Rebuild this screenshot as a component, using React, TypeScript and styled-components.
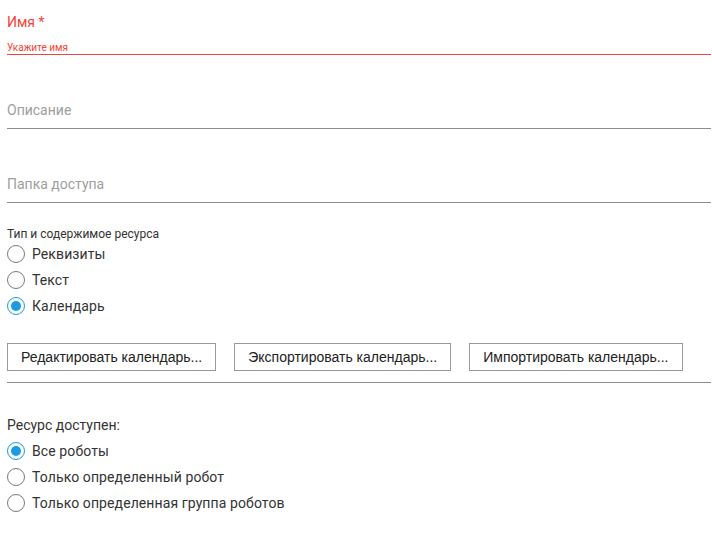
import styled, { createGlobalStyle } from "styled-components";

const GlobalStyle = createGlobalStyle`
    body {
        margin: 0;
        background: #ffffff;
        font-family: Roboto, "Noto Sans", sans-serif;
    }
`;

const typeOptions = ["Реквизиты", "Текст", "Календарь"];
const accessOptions = ["Все роботы", "Только определенный робот", "Только определенная группа роботов"];
const buttons = ["Редактировать календарь...", "Экспортировать календарь...", "Импортировать календарь..."];

const RadioGroup = ({ options, selected }: { options: string[]; selected: number }) => (
    <Group>
        {options.map((o, i) => (
            <RadioRow key={i}>
                <Circle $checked={i === selected} />
                {o}
            </RadioRow>
        ))}
    </Group>
);

const App = () => {
    return (
        <Page>
            <GlobalStyle />
            <ErrorField>
                <Label>Имя *</Label>
                <ErrorText>Укажите имя</ErrorText>
            </ErrorField>
            <Field>
                <Placeholder>Описание</Placeholder>
            </Field>
            <Field>
                <Placeholder>Папка доступа</Placeholder>
            </Field>

            <SmallCaption>Тип и содержимое ресурса</SmallCaption>
            <RadioGroup options={typeOptions} selected={2} />

            <ButtonBar>
                {buttons.map((b) => (
                    <Button key={b}>{b}</Button>
                ))}
            </ButtonBar>

            <Caption>Ресурс доступен:</Caption>
            <RadioGroup options={accessOptions} selected={0} />
        </Page>
    );
};

const Page = styled.div`
    padding: 0 1px 0 7px;
    color: #333333;
`;

const ErrorField = styled.div`
    height: 55px;
    box-sizing: border-box;
    border-bottom: 1px solid #e8453c;
    display: flex;
    flex-direction: column;
`;

const Field = styled.div`
    height: 74px;
    box-sizing: border-box;
    border-bottom: 1px solid #8c8c8c;
    display: flex;
    flex-direction: column;
    justify-content: flex-end;
`;

const Label = styled.div`
    margin-top: 14px;
    font-size: 14px;
    line-height: 16px;
    color: #f44336;
`;

const ErrorText = styled.div`
    margin-top: 12px;
    font-size: 10px;
    line-height: 12px;
    color: #f44336;
`;

const Placeholder = styled.div`
    font-size: 14px;
    line-height: 16px;
    color: #9e9e9e;
    padding-bottom: 10px;
`;

const SmallCaption = styled.div`
    margin-top: 24px;
    font-size: 12px;
    line-height: 14px;
`;

const Caption = styled.div`
    margin: 34px 0 5px;
    font-size: 14px;
    line-height: 16px;
`;

const Group = styled.div`
    display: flex;
    flex-direction: column;
`;

const RadioRow = styled.div`
    display: flex;
    align-items: center;
    gap: 7px;
    height: 26px;
    font-size: 14px;
    letter-spacing: 0.1px;
    color: #333333;
`;

const Circle = styled.span<{ $checked: boolean }>`
    box-sizing: border-box;
    width: 18px;
    height: 18px;
    border-radius: 50%;
    border: 1.5px solid ${({ $checked }) => ($checked ? "#1a9be6" : "#7a7a7a")};
    display: flex;
    align-items: center;
    justify-content: center;

    &::after {
        content: "";
        display: ${({ $checked }) => ($checked ? "block" : "none")};
        width: 10px;
        height: 10px;
        border-radius: 50%;
        background: #1a9be6;
    }
`;

const ButtonBar = styled.div`
    margin-top: 24px;
    display: flex;
    gap: 18px;
    padding-bottom: 11px;
    border-bottom: 1px solid #8c8c8c;
`;

const Button = styled.button`
    height: 28px;
    box-sizing: border-box;
    padding: 0 13px;
    background: #ffffff;
    border: 1px solid #999999;
    font-family: "Liberation Sans", Arial, sans-serif;
    font-size: 14px;
    color: #222222;
`;

export default App;
